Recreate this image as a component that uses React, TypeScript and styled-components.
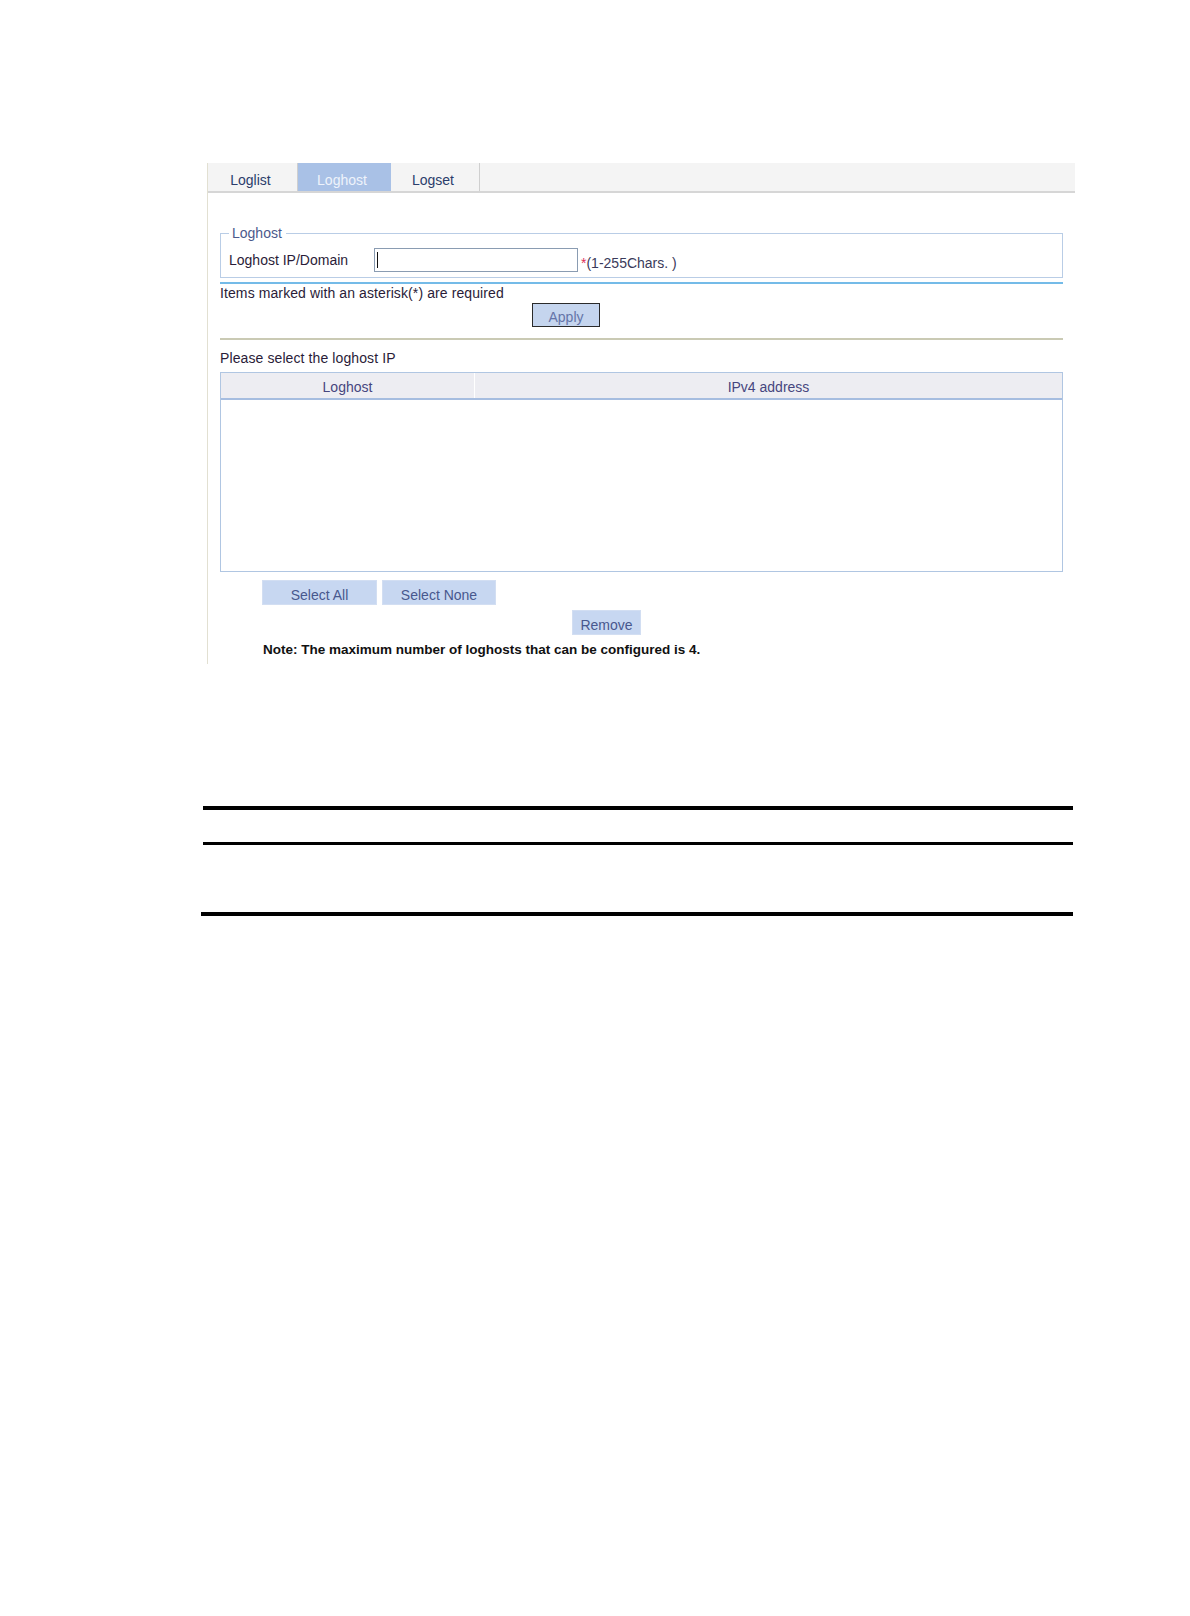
import styled, { createGlobalStyle } from "styled-components";

const GlobalStyle = createGlobalStyle`
  html, body {
    margin: 0;
    padding: 0;
    background: #ffffff;
  }
  body {
    font-family: "Liberation Sans", Arial, sans-serif;
  }
`;

const Page = styled.div`
  padding-top: 163px;
  padding-bottom: 200px;
`;

const Frame = styled.div`
  margin-left: 207px;
  width: 867px;
  border-left: 1px solid #e2e0d2;
  padding-bottom: 7px;
`;

const TabBar = styled.div`
  display: flex;
  height: 28px;
  background: #f4f4f4;
  border-bottom: 2px solid #d6d6d6;
`;

const Tab = styled.div<{ $active?: boolean; $w: number }>`
  display: flex;
  align-items: center;
  justify-content: center;
  width: ${(p) => p.$w}px;
  padding: 5px 4px 0 0;
  box-sizing: border-box;
  font-size: 14px;
  color: ${(p) => (p.$active ? "#eef3fb" : "#2b3d6b")};
  background: ${(p) => (p.$active ? "#a9c1e6" : "transparent")};
  border-right: 1px solid ${(p) => (p.$active ? "#a9c1e6" : "#cfcfcf")};
`;

const Content = styled.div`
  padding: 0 12px;
`;

const FieldSet = styled.fieldset`
  margin: 32px 0 0 0;
  padding: 0 0 4px 8px;
  border: 1px solid #b9cde6;
  min-width: 0;
`;

const Legend = styled.legend`
  padding: 0 4px 0 3px;
  font-size: 14px;
  line-height: 16px;
  color: #4b5a8c;
`;

const FieldRow = styled.div`
  display: flex;
  align-items: center;
  height: 26px;
  margin-top: 6px;
`;

const Label = styled.div`
  width: 145px;
  font-size: 14px;
  color: #2a1c38;
`;

const InputBox = styled.div`
  display: flex;
  align-items: center;
  width: 204px;
  height: 24px;
  box-sizing: border-box;
  border: 1px solid #8a9cb2;
  background: #fff;
`;

const Caret = styled.span`
  width: 1px;
  height: 16px;
  margin-left: 2px;
  background: #111;
`;

const Hint = styled.span`
  margin-left: 3px;
  padding-top: 5px;
  font-size: 14px;
  color: #3a3a5a;
`;

const Star = styled.span`
  color: #e0305a;
`;

const Rule = styled.div<{ $color: string; $size: number; $top: number; $left?: number }>`
  margin-top: ${(p) => p.$top}px;
  margin-left: ${(p) => p.$left ?? 0}px;
  height: ${(p) => p.$size}px;
  background: ${(p) => p.$color};
`;

const Text = styled.div<{ $top: number }>`
  margin-top: ${(p) => p.$top}px;
  font-size: 14px;
  line-height: 16px;
  letter-spacing: 0.1px;
  color: #2a1c38;
`;

const ApplyButton = styled.button`
  display: block;
  margin: 2px 0 0 312px;
  width: 68px;
  height: 24px;
  padding: 3px 0 0;
  border: 1px solid #2a2a2a;
  background: #c5d5ee;
  font-family: inherit;
  font-size: 14px;
  color: #6474a8;
`;

const Table = styled.div`
  margin-top: 6px;
  height: 200px;
  box-sizing: border-box;
  border: 1px solid #b0c6e2;
`;

const HeadRow = styled.div`
  display: flex;
  height: 25px;
  background: #ededf2;
  border-bottom: 2px solid #a6bde0;
`;

const HeadCell = styled.div<{ $w?: number }>`
  ${(p) => (p.$w ? `width: ${p.$w}px;` : "flex: 1;")}
  display: flex;
  align-items: center;
  justify-content: center;
  padding-top: 3px;
  box-sizing: border-box;
  font-size: 14px;
  color: #46467e;
  & + & {
    border-left: 1px solid #ffffff;
  }
`;

const ButtonRow = styled.div<{ $left: number; $top: number }>`
  display: flex;
  gap: 5px;
  margin: ${(p) => p.$top}px 0 0 ${(p) => p.$left}px;
`;

const FlatButton = styled.button<{ $w: number }>`
  width: ${(p) => p.$w}px;
  height: 25px;
  padding: 4px 0 0;
  border: 1px solid #d2def2;
  background: #c7d7f1;
  font-family: inherit;
  font-size: 14px;
  color: #48588e;
`;

const Note = styled.div`
  margin: 8px 0 0 43px;
  font-size: 13.5px;
  line-height: 14px;
  font-weight: bold;
  color: #111111;
`;

const Rules = styled.div`
  margin: 142px 0 0 203px;
  width: 870px;
`;

export default function App() {
  return (
    <>
      <GlobalStyle />
      <Page>
        <Frame>
          <TabBar>
            <Tab $w={90}>Loglist</Tab>
            <Tab $w={93} $active>
              Loghost
            </Tab>
            <Tab $w={89}>Logset</Tab>
          </TabBar>
          <Content>
            <FieldSet>
              <Legend>Loghost</Legend>
              <FieldRow>
                <Label>Loghost IP/Domain</Label>
                <InputBox>
                  <Caret />
                </InputBox>
                <Hint>
                  <Star>*</Star>(1-255Chars. )
                </Hint>
              </FieldRow>
            </FieldSet>
            <Rule $color="#74bbe8" $size={2} $top={4} />
            <Text $top={1}>Items marked with an asterisk(*) are required</Text>
            <ApplyButton>Apply</ApplyButton>
            <Rule $color="#cacab4" $size={2} $top={11} />
            <Text $top={10}>Please select the loghost IP</Text>
            <Table>
              <HeadRow>
                <HeadCell $w={253}>Loghost</HeadCell>
                <HeadCell>IPv4 address</HeadCell>
              </HeadRow>
            </Table>
            <ButtonRow $left={42} $top={8}>
              <FlatButton $w={115}>Select All</FlatButton>
              <FlatButton $w={114}>Select None</FlatButton>
            </ButtonRow>
            <ButtonRow $left={352} $top={5}>
              <FlatButton $w={69}>Remove</FlatButton>
            </ButtonRow>
            <Note>Note: The maximum number of loghosts that can be configured is 4.</Note>
          </Content>
        </Frame>
        <Rules>
          <Rule $color="#000" $size={4} $top={0} />
          <Rule $color="#000" $size={3} $top={32} />
          <Rule $color="#000" $size={4} $top={67} $left={-2} />
        </Rules>
      </Page>
    </>
  );
}
